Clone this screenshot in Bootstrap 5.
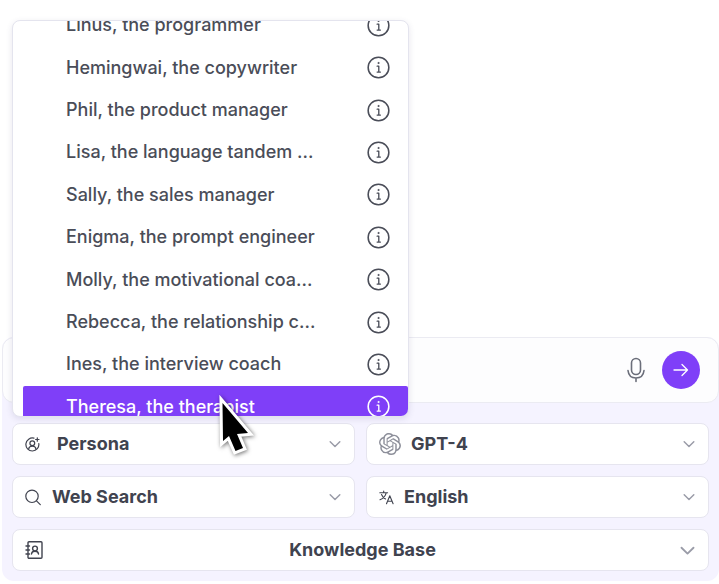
<!DOCTYPE html>
<html lang="en">
<head>
<meta charset="utf-8">
<meta name="viewport" content="width=device-width, initial-scale=1">
<title>Chat composer</title>
<link rel="stylesheet" href="https://cdn.jsdelivr.net/npm/bootstrap@5.3.0/dist/css/bootstrap.min.css">
<style>
body { font-family: Inter, "Liberation Sans", sans-serif; font-size: 18px; line-height: 24px; color: #40434f; background: #fff; }
svg { display: block; flex: none; fill: none; stroke: currentColor; stroke-linecap: round; stroke-linejoin: round; }
.shell { padding: 0 0 3px 2px; }
.panel { background: #f5f3ff; border-radius: 12px; }
.composer { height: 66px; background: #fdfdfe; border: 1px solid #ebebf2; border-radius: 12px; padding: 0 18px; gap: 17px; }
.prompt, .prompt:focus { background: transparent; box-shadow: none; }
.mic { color: #6b6e7a; }
.send { width: 38px; height: 38px; background: #7f3ff8; color: #fff; }
.options { padding: 20px 10px 10px; display: grid; grid-template-columns: 1fr 1fr; gap: 11px; }
.option { height: 42px; background: #fff; border: 1px solid #e6e5ef; border-radius: 8px; padding: 0 13px 0 12px; gap: 10px; color: #40434f; font-weight: 700; }
.option select { appearance: none; border: 0; outline: 0; background: transparent; color: inherit; font-weight: inherit; padding: 0; min-width: 0; }
.option .chevron { color: #9a9ca8; }
.persona-label { padding-left: 7px; }
.wide { grid-column: 1 / -1; }
.picker { left: 0; bottom: 48px; width: 397px; height: 397px; background: #fff; border: 1px solid #e4e4ee; border-radius: 8px; box-shadow: 0 2px 6px rgba(60, 50, 110, .12); overflow: hidden; z-index: 5; }
.personas { height: 424px; margin: -17px 0 0 10px; }
.persona { padding: 0 18px 0 43px; flex: 1 1 0; color: #4a4d58; font-weight: 500; }
.persona button { color: inherit; background: none; border: 0; padding: 0; font-weight: inherit; }
.persona.chosen { background: #7f3ff8; color: #fff; border-radius: 2px; }
.pointer { position: absolute; left: 203px; top: -29px; z-index: 10; pointer-events: none; filter: drop-shadow(1px 1px 2px rgba(0, 0, 0, .55)); }
</style>
<script src="https://cdn.jsdelivr.net/npm/bootstrap@5.3.0/dist/js/bootstrap.bundle.min.js"></script>
</head>
<body>
<svg width="0" height="0" class="position-absolute" aria-hidden="true">
  <symbol id="info" viewBox="0 0 24 24"><circle cx="12" cy="12" r="10.800" stroke-width="1.600"/><path d="M10.600 10.600h1.700v6.200M10.600 16.800h3.400" stroke-width="1.400"/><circle cx="11.900" cy="7.300" r=".6" fill="currentColor" stroke-width=".9"/></symbol>
  <symbol id="down" viewBox="0 0 12 12"><path d="M1.200 3.800 6 8.500l4.800-4.700" stroke-width="1.500"/></symbol>
</svg>
<main class="shell min-vh-100 d-flex flex-column justify-content-end">
  <section class="panel">
    <form class="composer d-flex align-items-center">
      <input type="text" class="prompt form-control border-0 p-0" aria-label="Message">
      <button type="button" class="mic btn border-0 p-0" aria-label="Dictate">
        <svg width="18" height="26" viewBox="0 0 18 26" stroke-width="1.600"><rect x="4.500" y="1.500" width="9" height="16" rx="4.500"/><path d="M1 13.500c.5 4.800 3.700 7.500 8 7.500s7.500-2.700 8-7.500M9 21v3.500"/></svg>
      </button>
      <button type="button" class="send btn border-0 rounded-circle p-0 d-flex align-items-center justify-content-center flex-shrink-0" aria-label="Send">
        <svg width="16" height="14" viewBox="0 0 16 14" stroke-width="1.300"><path d="M1 7h13.500M9 1.500 14.500 7 9 12.500"/></svg>
      </button>
    </form>
    <div class="options">
      <div class="position-relative">
        <button type="button" class="option w-100 d-flex align-items-center" aria-expanded="true">
          <svg width="15" height="15" viewBox="0 0 15 15" stroke-width="1.200"><path d="M9 1.200A6.500 6.500 0 1 0 13.800 6.500"/><circle cx="7.300" cy="6.300" r="2.400"/><path d="M3.600 12.200c.5-4 6.900-4 7.400 0M12.300.8v3.400M10.600 2.500H14"/></svg>
          <span class="persona-label flex-fill text-start">Persona</span>
          <svg class="chevron" width="12" height="12"><use href="#down"/></svg>
        </button>
        <div class="picker position-absolute">
          <ul class="personas list-unstyled d-flex flex-column">
            <li class="persona d-flex align-items-center justify-content-between"><button type="button">Linus, the programmer</button><button type="button" aria-label="About Linus"><svg width="23" height="23"><use href="#info"/></svg></button></li>
            <li class="persona d-flex align-items-center justify-content-between"><button type="button">Hemingwai, the copywriter</button><button type="button" aria-label="About Hemingwai"><svg width="23" height="23"><use href="#info"/></svg></button></li>
            <li class="persona d-flex align-items-center justify-content-between"><button type="button">Phil, the product manager</button><button type="button" aria-label="About Phil"><svg width="23" height="23"><use href="#info"/></svg></button></li>
            <li class="persona d-flex align-items-center justify-content-between"><button type="button">Lisa, the language tandem ...</button><button type="button" aria-label="About Lisa"><svg width="23" height="23"><use href="#info"/></svg></button></li>
            <li class="persona d-flex align-items-center justify-content-between"><button type="button">Sally, the sales manager</button><button type="button" aria-label="About Sally"><svg width="23" height="23"><use href="#info"/></svg></button></li>
            <li class="persona d-flex align-items-center justify-content-between"><button type="button">Enigma, the prompt engineer</button><button type="button" aria-label="About Enigma"><svg width="23" height="23"><use href="#info"/></svg></button></li>
            <li class="persona d-flex align-items-center justify-content-between"><button type="button">Molly, the motivational coa...</button><button type="button" aria-label="About Molly"><svg width="23" height="23"><use href="#info"/></svg></button></li>
            <li class="persona d-flex align-items-center justify-content-between"><button type="button">Rebecca, the relationship c...</button><button type="button" aria-label="About Rebecca"><svg width="23" height="23"><use href="#info"/></svg></button></li>
            <li class="persona d-flex align-items-center justify-content-between"><button type="button">Ines, the interview coach</button><button type="button" aria-label="About Ines"><svg width="23" height="23"><use href="#info"/></svg></button></li>
            <li class="persona chosen d-flex align-items-center justify-content-between"><button type="button">Theresa, the therapist</button><button type="button" aria-label="About Theresa"><svg width="23" height="23"><use href="#info"/></svg></button></li>
          </ul>
        </div>
        <svg class="pointer" width="45" height="68" viewBox="0 0 45 68" aria-hidden="true"><path d="M7.500 9 8 47l6-5 6.500 15 7.500-3-6-14 11-1z" fill="#fff" stroke="#fff" stroke-width="6" stroke-linejoin="miter"/><path d="M7.500 9 8 47l6-5 6.500 15 7.500-3-6-14 11-1z" fill="#000" stroke="none"/></svg>
      </div>
      <div class="option d-flex align-items-center">
        <svg width="22" height="22" viewBox="0 0 24 24"><path fill="#8d8f9a" stroke="none" d="M22.2819 9.8211a5.9847 5.9847 0 0 0-.5157-4.9108 6.0462 6.0462 0 0 0-6.5098-2.9A6.0651 6.0651 0 0 0 4.9807 4.1818a5.9847 5.9847 0 0 0-3.9977 2.9 6.0462 6.0462 0 0 0 .7427 7.0966 5.98 5.98 0 0 0 .511 4.9107 6.051 6.051 0 0 0 6.5146 2.9001A5.9847 5.9847 0 0 0 13.2599 24a6.0557 6.0557 0 0 0 5.7718-4.2058 5.9894 5.9894 0 0 0 3.9977-2.9001 6.0557 6.0557 0 0 0-.7475-7.0729zm-9.022 12.6081a4.4755 4.4755 0 0 1-2.8764-1.0408l.1419-.0804 4.7783-2.7582a.7948.7948 0 0 0 .3927-.6813v-6.7369l2.02 1.1686a.071.071 0 0 1 .038.052v5.5826a4.504 4.504 0 0 1-4.4945 4.4944zm-9.6607-4.1254a4.4708 4.4708 0 0 1-.5346-3.0137l.142.0852 4.783 2.7582a.7712.7712 0 0 0 .7806 0l5.8428-3.3685v2.3324a.0804.0804 0 0 1-.0332.0615L9.74 19.9502a4.4992 4.4992 0 0 1-6.1408-1.6464zM2.3408 7.8956a4.485 4.485 0 0 1 2.3655-1.9728V11.6a.7664.7664 0 0 0 .3879.6765l5.8144 3.3543-2.0201 1.1685a.0757.0757 0 0 1-.071 0l-4.8303-2.7865A4.504 4.504 0 0 1 2.3408 7.872zm16.5963 3.8558L13.1038 8.364 15.1192 7.2a.0757.0757 0 0 1 .071 0l4.8303 2.7913a4.4944 4.4944 0 0 1-.6765 8.1042v-5.6772a.79.79 0 0 0-.407-.667zm2.0107-3.0231l-.142-.0852-4.7735-2.7818a.7759.7759 0 0 0-.7854 0L9.409 9.2297V6.8974a.0662.0662 0 0 1 .0284-.0615l4.8303-2.7866a4.4992 4.4992 0 0 1 6.6802 4.66zM8.3065 12.863l-2.02-1.1638a.0804.0804 0 0 1-.038-.0567V6.0742a4.4992 4.4992 0 0 1 7.3757-3.4537l-.142.0805L8.704 5.459a.7948.7948 0 0 0-.3927.6813zm1.0976-2.3654l2.602-1.4998 2.6069 1.4998v2.9994l-2.5974 1.4997-2.6067-1.4997Z"/></svg>
        <select class="flex-fill" aria-label="Model"><option>GPT-4</option></select>
        <svg class="chevron" width="12" height="12"><use href="#down"/></svg>
      </div>
      <div class="option d-flex align-items-center">
        <svg width="17" height="17" viewBox="0 0 17 17" stroke-width="1.200"><circle cx="7" cy="7.300" r="6.200"/><path d="m11.500 11.800 3.800 3.800"/></svg>
        <select class="flex-fill" aria-label="Web search"><option>Web Search</option></select>
        <svg class="chevron" width="12" height="12"><use href="#down"/></svg>
      </div>
      <div class="option d-flex align-items-center">
        <svg width="15" height="15" viewBox="0 0 15 15" stroke-width="1.100"><path d="M.8 2.800h7.800M4.700 1v1.800M7.200 2.800C6.500 5.800 4 8.500 1 9.700M2.500 4.500c.8 2 2.500 3.700 4 4.500M7.500 13.800l3.300-8 3.300 8M8.600 11.300H13"/></svg>
        <select class="flex-fill" aria-label="Language"><option>English</option></select>
        <svg class="chevron" width="12" height="12"><use href="#down"/></svg>
      </div>
      <button type="button" class="option wide d-flex align-items-center">
        <svg width="20" height="20" viewBox="0 0 20 20" stroke-width="1.400"><rect x="3" y="1.800" width="14" height="16.400" rx="1"/><path d="M1 6h3.500M1 10h3.500M1 14h3.500M6.500 14c.3-3.700 6.700-3.700 7 0"/><circle cx="10" cy="8.500" r="2.400"/></svg>
        <span class="flex-fill text-center">Knowledge Base</span>
        <svg class="chevron" width="15" height="15"><use href="#down"/></svg>
      </button>
    </div>
  </section>
</main>
</body>
</html>
